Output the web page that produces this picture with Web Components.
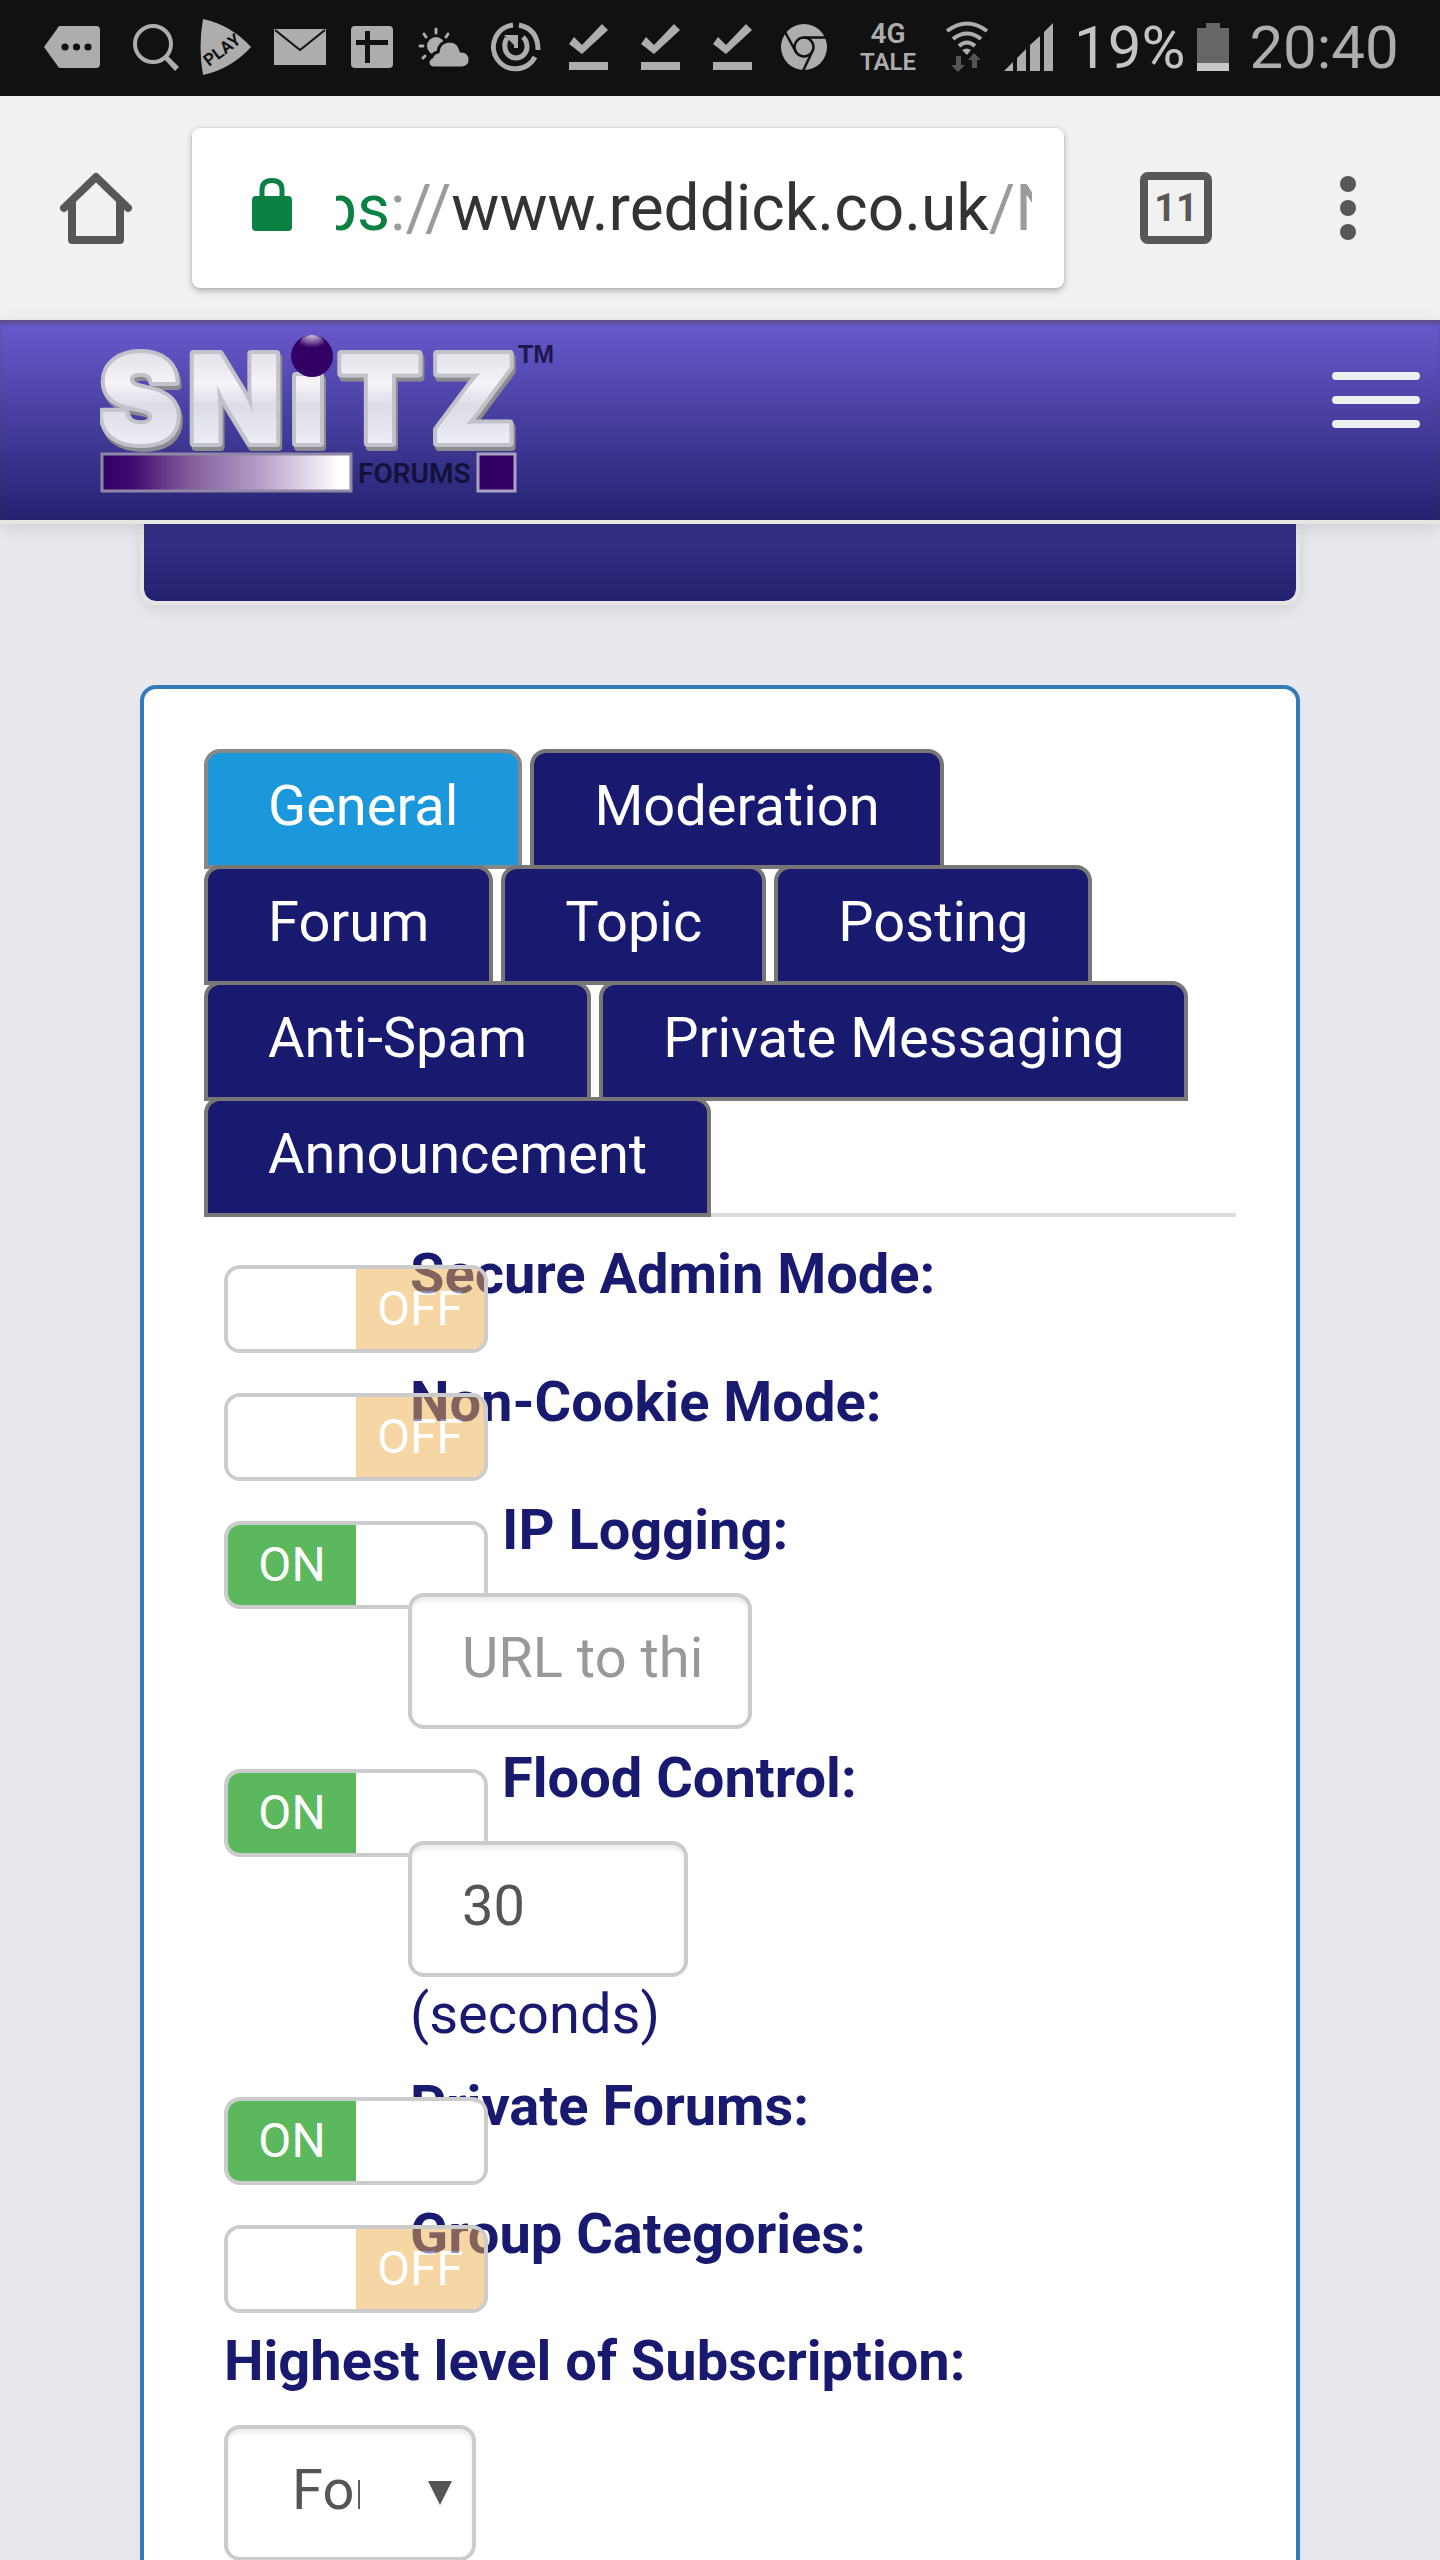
<!DOCTYPE html>
<html lang="en">
<head>
<meta charset="utf-8">
<meta name="viewport" content="width=device-width, initial-scale=1">
<title>Snitz Forums - Admin</title>
<style>
html, body { margin: 0; height: 100%; overflow: hidden; }
body { font: 56px/80px Roboto, sans-serif; color: #191970; background: #e8e9ed; }
</style>
</head>
<body>
<forum-screen></forum-screen>
<script>
const define = (name, html, setup) => customElements.define(name, class extends HTMLElement {
  constructor() {
    super();
    this.attachShadow({ mode: 'open' }).innerHTML = html;
  }
  connectedCallback() { if (setup) setup(this, this.shadowRoot); }
});

const check = '<svg width="72" height="96" viewBox="552 0 72 96"><path d="M569 44l5-7 8 8 20-21 6 6-26 24zM569 62h39v8h-39z"/></svg>';

define('status-bar', `
<style>
:host { display: flex; align-items: center; height: 96px; background: #111; color: #adadad; overflow: hidden; }
svg { display: block; flex: none; fill: #adadad; }
.net { width: 96px; text-align: center; font-weight: 600; font-size: 24px; line-height: 28px; }
.net b { display: block; font-size: 28px; font-weight: 600; }
.big { font-size: 60px; line-height: 96px; }
.pct { color: #c4c4c4; margin-left: 8px; }
.battery { margin: 0 20px 0 12px; }
</style>
<svg width="112" height="96" viewBox="0 0 112 96"><path d="M60 26h36q4 0 4 4v34q0 4-4 4H60q-2 0-3-3L44 47l13-18q1-3 3-3z"/><g fill="#111"><circle cx="65" cy="47" r="3.6"/><circle cx="76.500" cy="47" r="3.600"/><circle cx="88" cy="47" r="3.600"/></g></svg>
<svg width="76" height="96" viewBox="112 0 76 96"><circle cx="153" cy="44" r="18" fill="none" stroke="#adadad" stroke-width="4"/><path d="M164 59l4-3 11 11-4 4z"/></svg>
<svg width="74" height="96" viewBox="188 0 74 96"><path d="M203 19q28 6 48 28-20 22-48 28-5-28 0-56z"/><text x="209" y="67" font-family="Roboto, sans-serif" font-weight="700" font-size="17" fill="#111" transform="rotate(-37 209 67)">PLAY</text></svg>
<svg width="78" height="96" viewBox="262 0 78 96"><path d="M274 29h52v36h-52z"/><path d="M275 30l25 20 25-20" fill="none" stroke="#111" stroke-width="2"/></svg>
<svg width="66" height="96" viewBox="340 0 66 96"><rect x="351" y="26" width="42" height="42" rx="4"/><path fill="#111" d="M365 31h5v9h18v5h-18v18h-5V45h-9v-5h9z"/></svg>
<svg width="74" height="96" viewBox="406 0 74 96"><circle cx="436" cy="46" r="9"/><g stroke="#adadad" stroke-width="3" stroke-linecap="round"><path d="M436 29v4M424 34l2 3M448 34l-2 3M420 46h3M423 58l2-2"/></g><path stroke="#111" stroke-width="3" d="M434 68h28q8-1 8-8 0-9-9-9-2-10-12-10-10 1-11 11-5 1-6 5-4 2-4 6 1 5 6 5z"/></svg>
<svg width="72" height="96" viewBox="480 0 72 96"><g fill="none" stroke="#adadad" stroke-width="5"><path d="M513 25a22 22 0 1 0 22 32M519 25q19 4 19 25"/><path d="M507 38q-3 5-2 9a11 11 0 0 0 22 0q0-6-4-10"/><path d="M516 35v13" stroke-width="4"/></g><path d="M504 35h10v10z"/></svg>
${check}${check}${check}
<svg width="72" height="96" viewBox="768 0 72 96"><circle cx="804" cy="47" r="23"/><g fill="none" stroke="#111" stroke-width="2.500"><circle cx="804" cy="47" r="9.500"/><path d="M804 37.500h22M796 52L785 32M812 52l-9 19"/></g></svg>
<span class="net"><b>4G</b>TALE</span>
<svg width="62" height="96" viewBox="936 0 62 96"><g fill="none" stroke="#adadad" stroke-width="4"><path d="M947 31q20-15 40 0M953 39q14-11 28 0M959 46q8-7 16 0"/></g><path d="M962 50q5-3 9 0l-4 5z"/><path fill="#555" d="M956 56h5v9h4l-7 7-7-7h5zM972 68v-8h-4l6-7 7 7h-4v8z"/></svg>
<svg width="68" height="96" viewBox="998 0 68 96"><path d="M1004 71l9-9v9zM1017 71V58l9-9v22zM1030 71V45l10-9v35zM1044 71V32l9-9v48z"/></svg>
<span class="big pct">19%</span>
<svg class="battery" width="32" height="96" viewBox="0 0 32 96"><path fill="#666" d="M9 23h14v5h9v35H0V28h9z"/><path fill="#c8c8c8" d="M0 63h32v8H0z"/></svg>
<span class="big">20:40</span>
`);

define('browser-bar', `
<style>
:host { display: flex; align-items: center; height: 224px; box-sizing: border-box; padding: 0 68px 0 60px; background: #f1f1f1; }
button { appearance: none; border: 0; background: none; padding: 0; margin: 0; color: #575757; font: inherit; display: block; flex: none; }
svg { display: block; }
.address { flex: 1; display: flex; align-items: center; height: 160px; margin: 0 76px 0 60px; padding: 0 32px 0 60px; box-sizing: border-box; min-width: 0;
  background: #fff; border-radius: 8px; box-shadow: 0 3px 6px rgba(0,0,0,.25), 0 0 2px rgba(0,0,0,.15); }
.address svg { flex: none; margin-right: 44px; }
.url { flex: 1; overflow: hidden; white-space: nowrap; font-size: 64px; line-height: 80px; color: #9b9b9b; text-indent: -15px; padding-top: 2px; }
.url i { font-style: normal; color: #0b8043; }
.url b { font-weight: 400; color: #333; }
.count { width: 72px; height: 72px; box-sizing: border-box; border: 8px solid #575757; border-radius: 8px; font-size: 38px; line-height: 56px; font-weight: 700; margin-right: 120px; }
</style>
<button aria-label="Home"><svg width="72" height="72" viewBox="0 0 72 72"><path d="M4 36L36 5l32 31M12 31v37h48V31" fill="none" stroke="#575757" stroke-width="8" stroke-linecap="round" stroke-linejoin="round"/></svg></button>
<div class="address">
<svg width="40" height="60" viewBox="0 0 40 60"><rect y="18" width="40" height="35" rx="4" fill="#0b8043"/><path d="M10 21V12q0-9.500 10-9.500T30 12v9" fill="none" stroke="#0b8043" stroke-width="5"/></svg>
<div class="url"><i>ps</i>://<b>www.reddick.co.uk</b>/N</div>
</div>
<button class="count" aria-label="Open tabs">11</button>
<button aria-label="Menu"><svg width="40" height="72" viewBox="0 0 40 72"><g fill="#575757"><circle cx="16" cy="12" r="8"/><circle cx="16" cy="36" r="8"/><circle cx="16" cy="60" r="8"/></g></svg></button>
`);

define('forum-logo', `
<style>:host { display: block; } svg { display: block; }</style>
<svg width="460" height="160" viewBox="100 334 460 160" role="img" aria-label="Snitz Forums">
<defs>
<linearGradient id="metal" x1="0" y1="0" x2="0" y2="1"><stop offset="0" stop-color="#d2d3dc"/><stop offset=".4" stop-color="#f4f4f9"/><stop offset=".55" stop-color="#dcdce6"/><stop offset=".85" stop-color="#f0f0f8"/><stop offset="1" stop-color="#b8b9c0"/></linearGradient>
<linearGradient id="fade"><stop offset="0" stop-color="#330066"/><stop offset=".12" stop-color="#3f0a70"/><stop offset=".35" stop-color="#835c9a"/><stop offset=".65" stop-color="#b8a2cb"/><stop offset=".95" stop-color="#fff"/></linearGradient>
<radialGradient id="shine" cx=".5" cy="0" r=".8"><stop offset="0" stop-color="#d8c8e4"/><stop offset="1" stop-color="#330066"/></radialGradient>
<filter id="bevel" x="-5%" y="-5%" width="110%" height="115%"><feDropShadow dx="2" dy="4" stdDeviation="0" flood-color="#8b8b90"/></filter>
</defs>
<text x="99 188 290 338 431" y="443" font-family="Inter, sans-serif" font-weight="900" font-size="122" fill="url(#metal)" stroke="#c2c3ca" stroke-width="8" stroke-linejoin="round" paint-order="stroke" filter="url(#bevel)">SNiTZ</text>
<circle cx="312" cy="356" r="21" fill="#330066"/><ellipse cx="312" cy="343" rx="12" ry="8" fill="url(#shine)"/>
<rect x="102" y="454" width="249" height="37" fill="url(#fade)" stroke="#8f87a6" stroke-width="3"/>
<text x="358" y="483" font-family="Roboto, sans-serif" font-weight="600" font-size="28" fill="#11113a">FORUMS</text>
<rect x="478" y="454" width="37" height="37" fill="#330066" stroke="#aaa2c2" stroke-width="3"/>
<text x="518" y="363" font-family="'Liberation Sans', sans-serif" font-weight="700" font-size="25" fill="#1d184f">TM</text>
</svg>
`);

define('forum-nav', `
<style>
:host { display: flex; justify-content: space-between; align-items: flex-start; height: 204px; box-sizing: border-box; padding: 14px 20px 0 100px; position: relative; z-index: 2;
  background: linear-gradient(#6a5acd, #242270); border-bottom: 4px solid #e5e6e6; box-shadow: inset 0 4px 3px rgba(80,70,90,.5), 0 4px 16px rgba(0,0,0,.12); }
button { appearance: none; border: 0; background: none; margin: 38px 0 0; padding: 0; display: grid; gap: 16px; width: 88px; }
span { display: block; height: 8px; border-radius: 4px; background: #ecf0f1; }
</style>
<forum-logo></forum-logo>
<button aria-label="Toggle navigation"><span></span><span></span><span></span></button>
`);

define('tab-button', `
<style>
:host { display: block; margin: 0 8px -4px 0; }
button { appearance: none; display: block; margin: 0; padding: 13px 60px 19px; border: 4px solid #777; border-radius: 16px 16px 0 0; background: #191970; color: #fff; font: inherit; white-space: nowrap; }
:host([selected]) button { background: #1b98db; border-color: #888; }
</style>
<button role="tab"><slot></slot></button>
`, (el, root) => root.querySelector('button').setAttribute('aria-selected', el.hasAttribute('selected')));

define('tab-list', `
<style>
:host { display: flex; flex-wrap: wrap; border-bottom: 4px solid #ddd; }
</style>
<slot></slot>
`);

define('toggle-setting', `
<style>
:host { display: grid; grid-template-columns: 184px 92px 1fr; grid-template-rows: 80px auto; min-height: 128px; align-items: start; box-sizing: border-box; }
:host([extra]) { padding-bottom: 8px; }
.name { grid-area: 1 / 2 / 2 / 4; font-weight: 700; padding: 1px 0 0 2px; }
:host([extra]) .name { grid-column-start: 3; }
.switch { grid-area: 1 / 1 / 3 / 2; position: relative; z-index: 1; display: flex; width: 264px; height: 88px; box-sizing: border-box; margin-top: 32px; border: 4px solid #ccc; border-radius: 16px; overflow: hidden; font-size: 48px; color: #fff; text-align: center; }
input { position: absolute; inset: 0; width: 100%; height: 100%; margin: 0; opacity: 0; }
.switch span { flex: 1; }
.off { background: #f0ad4e; opacity: .5; }
.on { background: #5cb85c; }
.blank { background: #fff; }
.extra { grid-area: 2 / 2 / 3 / 4; position: relative; z-index: 2; padding-top: 24px; }
:host(:not([extra])) .extra { display: none; }
</style>
<label class="name" for="flag"></label>
<div class="switch"></div>
<div class="extra"><slot></slot></div>
`, (el, root) => {
  const on = el.hasAttribute('on');
  root.querySelector('.name').textContent = el.getAttribute('label');
  root.querySelector('.switch').innerHTML = (on
    ? '<span class="on">ON</span><span class="blank"></span>'
    : '<span class="blank"></span><span class="off">OFF</span>')
    + '<input id="flag" type="checkbox"' + (on ? ' checked' : '') + '>';
});

define('settings-card', `
<style>
:host { display: block; box-sizing: border-box; padding: 60px; border: 4px solid #337ab7; border-radius: 16px; background: #fff; box-shadow: 0 4px 8px rgba(0,0,0,.05); }
.fields { padding: 16px 20px 0; }
</style>
<slot name="tabs"></slot>
<div class="fields"><slot></slot></div>
`);

define('forum-screen', `
<style>
:host { display: flex; flex-direction: column; height: 100vh; overflow: hidden; }
status-bar, browser-bar, forum-nav { flex: none; }
main { padding: 0 140px; }
.title { height: 77px; border: 4px solid #e5e5e6; border-top: 0; border-radius: 0 0 16px 16px; background: linear-gradient(#383187, #242270) padding-box; box-shadow: 0 4px 16px rgba(0,0,0,.1); margin-bottom: 80px; }
.control { display: block; box-sizing: border-box; height: 136px; margin: 0; padding: 0 48px 6px 50px; border: 4px solid #ccc; border-radius: 16px; background: #fff; color: #555; font: inherit; box-shadow: inset 0 4px 4px rgba(0,0,0,.075); outline: 0; }
.control::placeholder { color: #999; opacity: 1; }
.url { width: 344px; }
.seconds { width: 280px; }
.unit { display: block; line-height: 72px; padding: 1px 0 7px 2px; }
.level { display: block; font-weight: 700; padding-bottom: 24px; }
.select { display: grid; width: 252px; align-items: center; }
.select > * { grid-area: 1 / 1; }
.select .control { appearance: none; width: 100%; padding: 0 112px 6px 64px; text-overflow: clip; }
.select svg { justify-self: end; margin-right: 24px; pointer-events: none; }
</style>
<status-bar></status-bar>
<browser-bar></browser-bar>
<forum-nav></forum-nav>
<main>
<div class="title"></div>
<settings-card>
<tab-list slot="tabs" role="tablist">
<tab-button selected>General</tab-button><tab-button>Moderation</tab-button><tab-button>Forum</tab-button><tab-button>Topic</tab-button><tab-button>Posting</tab-button><tab-button>Anti-Spam</tab-button><tab-button>Private Messaging</tab-button><tab-button>Announcement</tab-button>
</tab-list>
<toggle-setting label="Secure Admin Mode:"></toggle-setting>
<toggle-setting label="Non-Cookie Mode:"></toggle-setting>
<toggle-setting label="IP Logging:" on extra><input class="control url" type="text" placeholder="URL to this" aria-label="IP lookup URL"></toggle-setting>
<toggle-setting label="Flood Control:" on extra><input class="control seconds" id="flood" type="text" value="30"><label class="unit" for="flood">(seconds)</label></toggle-setting>
<toggle-setting label="Private Forums:" on></toggle-setting>
<toggle-setting label="Group Categories:"></toggle-setting>
<label class="level" for="level">Highest level of Subscription:</label>
<div class="select"><select class="control" id="level"><option>Forum</option></select><svg width="24" height="24" viewBox="0 0 24 24"><path d="M0 0h24L12 24z" fill="#555"/></svg></div>
</settings-card>
</main>
`);
</script>
</body>
</html>
